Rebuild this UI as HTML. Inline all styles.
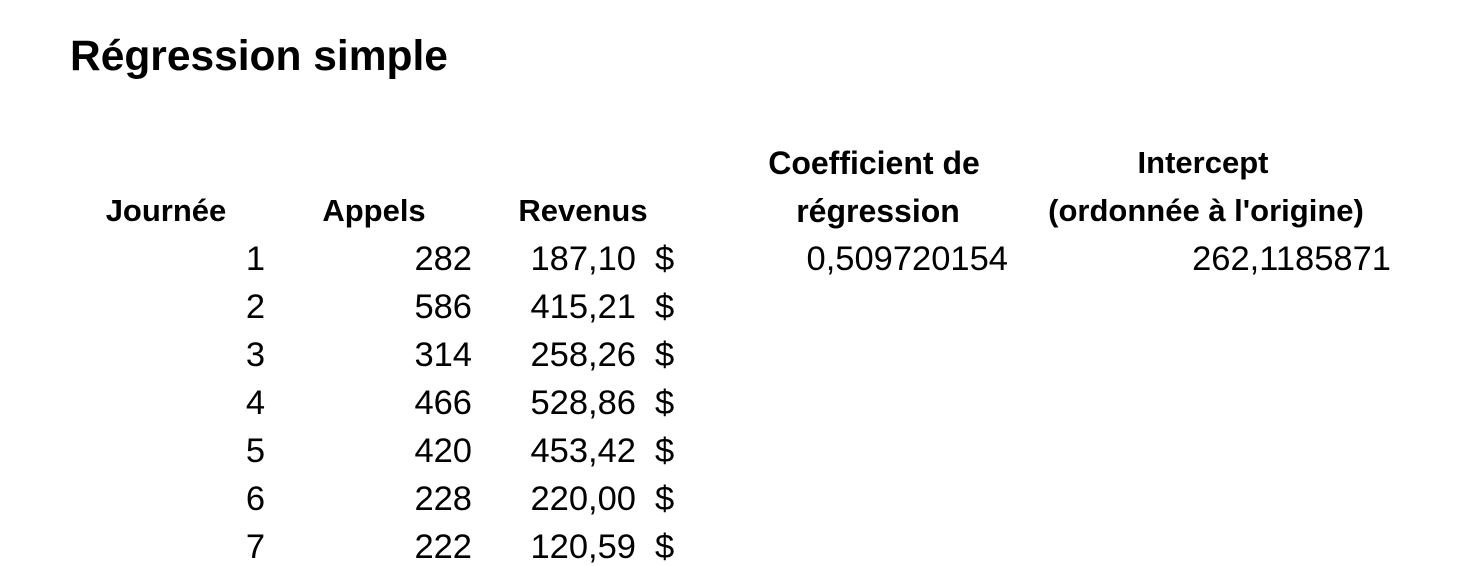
<!DOCTYPE html>
<html><head><meta charset="utf-8"><style>
html,body{margin:0;padding:0;background:#fff;}
body{width:1465px;height:545px;overflow:hidden;position:relative;font-family:"Liberation Sans",sans-serif;color:#000;}
.t{position:absolute;white-space:nowrap;line-height:1;}
h1{position:absolute;left:70px;top:36px;margin:0;font-size:42.5px;font-weight:bold;line-height:1;white-space:nowrap;}
.h{font-weight:bold;font-size:31px;text-align:center;width:400px;}
.n{font-size:34.5px;text-align:right;}
</style></head><body>
<h1>Régression simple</h1>
<div class="t h" style="left:674px;top:147px;font-size:32px">Coefficient de</div>
<div class="t h" style="left:1003px;top:147px">Intercept</div>
<div class="t h" style="left:-34px;top:195px">Journée</div>
<div class="t h" style="left:174px;top:195px">Appels</div>
<div class="t h" style="left:383px;top:195px">Revenus</div>
<div class="t h" style="left:678px;top:195px;font-size:32px">régression</div>
<div class="t h" style="left:1006px;top:195px">(ordonnée à l'origine)</div>

<div class="t n" style="right:457px;top:242px;">0,509720154</div>
<div class="t n" style="right:74px;top:242px;">262,1185871</div>

<div id="rows"></div>
<script>
var d=[[1,282,"187,10"],[2,586,"415,21"],[3,314,"258,26"],[4,466,"528,86"],[5,420,"453,42"],[6,228,"220,00"],[7,222,"120,59"]];
var h="";
d.forEach(function(r,i){var y=242+i*48;
h+='<div class="t n" style="right:1200px;top:'+y+'px">'+r[0]+'</div>';
h+='<div class="t n" style="right:993px;top:'+y+'px">'+r[1]+'</div>';
h+='<div class="t n" style="right:829px;top:'+y+'px">'+r[2]+'</div>';
h+='<div class="t n" style="left:655px;top:'+y+'px">$</div>';});
document.getElementById("rows").innerHTML=h;
</script>
</body></html>
